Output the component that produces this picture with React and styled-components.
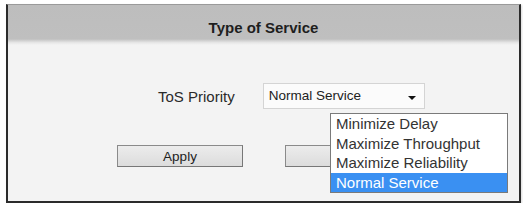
import React from "react";
import styled, { createGlobalStyle } from "styled-components";

const Global = createGlobalStyle`
  html, body { margin: 0; padding: 0; background: #ffffff; }
  body { font-family: "Liberation Sans", Arial, sans-serif; color: #222; }
  * { box-sizing: border-box; }
`;

const Frame = styled.div`
  position: relative;
  margin: 4px 0 0 6px;
  width: 515px;
  height: 199px;
  border-top: 1px solid #9a9a9a;
  border-left: 2px solid #2b2b2b;
  border-right: 2px solid #2b2b2b;
  border-bottom: 2px solid #2b2b2b;
  background: #f3f3f3;
  box-shadow: 1px 1px 2px rgba(0,0,0,0.15);
`;

const Header = styled.div`
  height: 40px;
  padding-top: 15px;
  text-align: center;
  font-weight: bold;
  font-size: 15px;
  line-height: 16px;
  color: #1e1e1e;
  background: linear-gradient(to bottom, #bdbdbd 0, #bfbfbf 85%, #e6e6e6 94%, #f3f3f3 100%);
`;

const Body = styled.div`
  padding: 38px 0 0 150px;
`;

const FieldRow = styled.div`
  display: flex;
  align-items: center;
  gap: 28px;
`;

const Label = styled.span`
  font-size: 15px;
  color: #2a2a2a;
`;

const Select = styled.div`
  position: relative;
  width: 162px;
  height: 26px;
  background: #fbfbfb;
  border: 1px solid #d4d4d4;
  font-size: 13.5px;
  line-height: 24px;
  padding-left: 5px;
  color: #222;
`;

const Arrow = styled.span`
  position: absolute;
  right: 8px;
  top: 12px;
  width: 0;
  height: 0;
  border-left: 4px solid transparent;
  border-right: 4px solid transparent;
  border-top: 4px solid #111;
`;

const ButtonRow = styled.div`
  display: flex;
  gap: 42px;
  margin: 36px 0 0 -41px;
`;

const Button = styled.button`
  width: 126px;
  height: 22px;
  padding: 0;
  font-family: "Liberation Sans", Arial, sans-serif;
  font-size: 13.5px;
  color: #222;
  background: linear-gradient(to bottom, #ececec, #dcdcdc);
  border: 1px solid #8a8a8a;
  border-right-color: #777;
  border-bottom-color: #777;
`;

const List = styled.ul`
  position: absolute;
  left: 322px;
  top: 108px;
  width: 178px;
  height: 80px;
  margin: 0;
  padding: 0;
  list-style: none;
  background: #ffffff;
  border: 1px solid #7a7a7a;
  font-size: 15px;
`;

const Option = styled.li`
  height: 19.5px;
  line-height: 19.5px;
  padding-left: 5px;
  color: ${(p) => (p.$selected ? "#ffffff" : "#333")};
  background: ${(p) => (p.$selected ? "#3a90f2" : "transparent")};
`;

const options = ["Minimize Delay", "Maximize Throughput", "Maximize Reliability", "Normal Service"];

export default function App() {
  return (
    <>
      <Global />
      <Frame>
        <Header>Type of Service</Header>
        <Body>
          <FieldRow>
            <Label>ToS Priority</Label>
            <Select>
              Normal Service
              <Arrow />
            </Select>
          </FieldRow>
          <ButtonRow>
            <Button>Apply</Button>
            <Button aria-label="Cancel" />
          </ButtonRow>
        </Body>
        <List>
          {options.map((o) => (
            <Option key={o} $selected={o === "Normal Service"}>{o}</Option>
          ))}
        </List>
      </Frame>
    </>
  );
}
